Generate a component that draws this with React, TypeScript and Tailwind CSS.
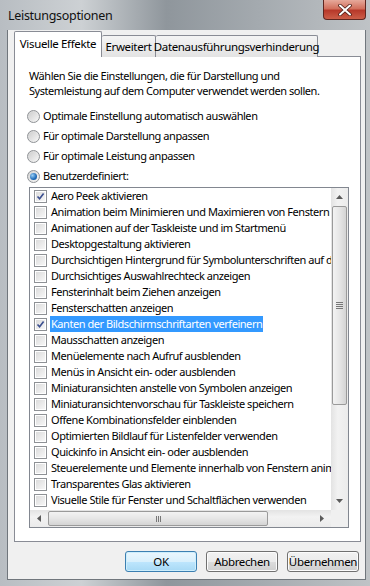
import React from "react";

const items: { label: string; checked?: boolean; selected?: boolean }[] = [
  { label: "Aero Peek aktivieren", checked: true },
  { label: "Animation beim Minimieren und Maximieren von Fenstern" },
  { label: "Animationen auf der Taskleiste und im Startmenü" },
  { label: "Desktopgestaltung aktivieren" },
  { label: "Durchsichtigen Hintergrund für Symbolunterschriften auf dem Desktop" },
  { label: "Durchsichtiges Auswahlrechteck anzeigen" },
  { label: "Fensterinhalt beim Ziehen anzeigen" },
  { label: "Fensterschatten anzeigen" },
  { label: "Kanten der Bildschirmschriftarten verfeinern", checked: true, selected: true },
  { label: "Mausschatten anzeigen" },
  { label: "Menüelemente nach Aufruf ausblenden" },
  { label: "Menüs in Ansicht ein- oder ausblenden" },
  { label: "Miniaturansichten anstelle von Symbolen anzeigen" },
  { label: "Miniaturansichtenvorschau für Taskleiste speichern" },
  { label: "Offene Kombinationsfelder einblenden" },
  { label: "Optimierten Bildlauf für Listenfelder verwenden" },
  { label: "Quickinfo in Ansicht ein- oder ausblenden" },
  { label: "Steuerelemente und Elemente innerhalb von Fenstern animieren" },
  { label: "Transparentes Glas aktivieren" },
  { label: "Visuelle Stile für Fenster und Schaltflächen verwenden" },
];

function Radio({ checked }: { checked?: boolean }) {
  return (
    <div className="w-[13px] h-[13px] rounded-full border border-[#8f9296] bg-[linear-gradient(135deg,#d4d4d4,#f6f6f6)] flex items-center justify-center shrink-0">
      {checked ? (
        <div className="w-[7px] h-[7px] rounded-full bg-[radial-gradient(circle_at_35%_35%,#9ad0f6,#1f6bb8_60%,#164c8c)]" />
      ) : (
        <div className="w-[9px] h-[9px] rounded-full bg-[linear-gradient(135deg,#cfcfcf,#f4f4f4)]" />
      )}
    </div>
  );
}

function Check({ checked }: { checked?: boolean }) {
  return (
    <div className="w-[13px] h-[13px] border border-[#8e9195] bg-white p-px shrink-0">
      <div className="w-full h-full bg-[linear-gradient(135deg,#dcdcdc,#f7f7f7)] relative">
        {checked && (
          <svg viewBox="0 0 9 9" className="absolute inset-0 w-[9px] h-[9px]">
            <path d="M1.5 4.5 L3.6 6.8 L7.6 1.4" fill="none" stroke="#3b4f8f" strokeWidth="1.6" />
          </svg>
        )}
      </div>
    </div>
  );
}

export default function App() {
  const font = "font-['Noto_Sans',sans-serif] text-[11px] tracking-[-0.45px]";
  return (
    <div className={`w-[370px] h-[586px] overflow-hidden flex flex-col bg-[linear-gradient(90deg,#b8bdc2_0%,#cdd1d4_22%,#8f969c_45%,#a4aaaf_70%,#bfc3c6_100%)] ${font} text-black`}>
      {/* Title bar */}
      <div className="h-[30px] flex items-start relative shrink-0">
        <div className="pl-[8px] pt-[7px] text-[12.5px] tracking-[-0.3px] text-[#111]">Leistungsoptionen</div>
        <div className="ml-auto mr-[4px] w-[43px] h-[20px] rounded-b-[4px] border border-t-0 border-[#5e2620] bg-[linear-gradient(180deg,#e6a99b_0%,#d2705d_45%,#b7392a_55%,#cc5e48_100%)] flex items-center justify-center">
          <svg viewBox="0 0 14 12" className="w-[14px] h-[12px]">
            <path d="M2 1.5 L12 10.5 M12 1.5 L2 10.5" stroke="#4a1c16" strokeWidth="3.6" strokeLinecap="round" />
            <path d="M2 1.5 L12 10.5 M12 1.5 L2 10.5" stroke="#ffffff" strokeWidth="2" strokeLinecap="round" />
          </svg>
        </div>
      </div>

      {/* Client area */}
      <div className="ml-[7px] mr-[4px] h-[550px] bg-[#f0f0f0] border-l border-r border-b border-[#70767c] flex flex-col px-[5px] pt-px">
        {/* Tabs */}
        <div className="flex items-end h-[26px] relative z-10 ml-px whitespace-nowrap text-[11.5px] tracking-[-0.35px]">
          <div className="w-[88px] h-[26px] bg-white border border-b-0 border-[#898c95] rounded-t-[2px] flex items-center justify-center pb-[2px]">
            Visuelle Effekte
          </div>
          <div className="w-[54px] h-[22px] bg-[linear-gradient(180deg,#f4f4f4,#e3e3e3)] border border-l-0 border-b-0 border-[#898c95] rounded-t-[2px] flex items-center justify-center">
            Erweitert
          </div>
          <div className="w-[162px] h-[22px] bg-[linear-gradient(180deg,#f4f4f4,#e3e3e3)] border border-l-0 border-b-0 border-[#898c95] rounded-t-[2px] flex items-center justify-center">
            Datenausführungsverhinderung
          </div>
        </div>

        {/* Panel */}
        <div className="-mt-px ml-px w-[347px] h-[486px] bg-white border border-[#898c95] pl-[14px] pt-[11px] flex flex-col">
          <div className="leading-[15px]">
            Wählen Sie die Einstellungen, die für Darstellung und
            <br />
            Systemleistung auf dem Computer verwendet werden sollen.
          </div>
          <div className="mt-[8px] flex flex-col">
            {[
              "Optimale Einstellung automatisch auswählen",
              "Für optimale Darstellung anpassen",
              "Für optimale Leistung anpassen",
              "Benutzerdefiniert:",
            ].map((t, i) => (
              <div key={t} className="h-[20px] flex items-center -ml-[2px]">
                <Radio checked={i === 3} />
                <span className="ml-[3px]">{t}</span>
              </div>
            ))}
          </div>

          {/* Listbox */}
          <div className="mt-px w-[320px] border border-[#828790] bg-white flex flex-col">
            <div className="flex">
              <div className="w-[301px] h-[322px] overflow-hidden flex flex-col">
                {items.map((it) => (
                  <div key={it.label} className="h-[16px] flex items-center pl-[4px] whitespace-nowrap shrink-0">
                    <Check checked={it.checked} />
                    <span
                      className={`ml-[3px] px-px leading-[16px] ${it.selected ? "bg-[#3399ff] text-white" : ""}`}
                    >
                      {it.label}
                    </span>
                  </div>
                ))}
              </div>
              {/* Vertical scrollbar */}
              <div className="w-[17px] h-[322px] bg-[linear-gradient(90deg,#e3e3e3,#f2f2f2_40%,#ebebeb)] flex flex-col items-center">
                <div className="h-[18px] w-full flex items-center justify-center">
                  <svg viewBox="0 0 7 4" className="w-[7px] h-[4px]">
                    <path d="M0 4 L3.5 0 L7 4 Z" fill="#5a5a5a" />
                  </svg>
                </div>
                <div className="w-[15px] h-[199px] rounded-[2px] border border-[#9a9a9a] bg-[linear-gradient(90deg,#f3f3f3,#e6e6e6_50%,#d4d4d4)] flex items-center justify-center">
                  <div className="flex flex-col gap-[1px]">
                    <div className="w-[7px] h-px bg-[#777]" />
                    <div className="w-[7px] h-px bg-[#777]" />
                    <div className="w-[7px] h-px bg-[#777]" />
                    <div className="w-[7px] h-px bg-[#777]" />
                  </div>
                </div>
                <div className="flex-1" />
                <div className="h-[18px] w-full flex items-center justify-center">
                  <svg viewBox="0 0 7 4" className="w-[7px] h-[4px]">
                    <path d="M0 0 L3.5 4 L7 0 Z" fill="#5a5a5a" />
                  </svg>
                </div>
              </div>
            </div>
            {/* Horizontal scrollbar */}
            <div className="flex h-[17px]">
              <div className="w-[301px] h-[17px] bg-[linear-gradient(180deg,#e3e3e3,#f2f2f2_40%,#ebebeb)] flex items-center">
                <div className="w-[18px] h-full flex items-center justify-center">
                  <svg viewBox="0 0 4 7" className="w-[4px] h-[7px]">
                    <path d="M4 0 L0 3.5 L4 7 Z" fill="#5a5a5a" />
                  </svg>
                </div>
                <div className="w-[220px] h-[15px] rounded-[2px] border border-[#9a9a9a] bg-[linear-gradient(180deg,#f3f3f3,#e6e6e6_50%,#d4d4d4)] flex items-center justify-center">
                  <div className="flex gap-[1px]">
                    <div className="w-px h-[6px] bg-[#777]" />
                    <div className="w-px h-[6px] bg-[#777]" />
                    <div className="w-px h-[6px] bg-[#777]" />
                  </div>
                </div>
                <div className="flex-1" />
                <div className="w-[18px] h-full flex items-center justify-center">
                  <svg viewBox="0 0 4 7" className="w-[4px] h-[7px]">
                    <path d="M0 0 L4 3.5 L0 7 Z" fill="#5a5a5a" />
                  </svg>
                </div>
              </div>
              <div className="w-[17px] h-[17px] bg-[#f0f0f0]" />
            </div>
          </div>
        </div>

        {/* Buttons */}
        <div className="mt-[9px] flex justify-end gap-[9px] pr-[1px] text-[11.5px] tracking-[-0.35px]">
          <button className="w-[72px] h-[21px] rounded-[3px] border border-[#3c7fb1] bg-[linear-gradient(180deg,#eaf6fd_0%,#d9f0fc_50%,#bee6fd_51%,#a7d9f5_100%)] shadow-[inset_0_0_0_1px_#cdeefc]">
            OK
          </button>
          <button className="w-[72px] h-[21px] rounded-[3px] border border-[#707070] bg-[linear-gradient(180deg,#f2f2f2_0%,#ebebeb_50%,#dddddd_51%,#cfcfcf_100%)] shadow-[inset_0_0_0_1px_#fcfcfc]">
            Abbrechen
          </button>
          <button className="w-[72px] h-[21px] rounded-[3px] border border-[#707070] bg-[linear-gradient(180deg,#f2f2f2_0%,#ebebeb_50%,#dddddd_51%,#cfcfcf_100%)] shadow-[inset_0_0_0_1px_#fcfcfc]">
            Übernehmen
          </button>
        </div>
      </div>
    </div>
  );
}
